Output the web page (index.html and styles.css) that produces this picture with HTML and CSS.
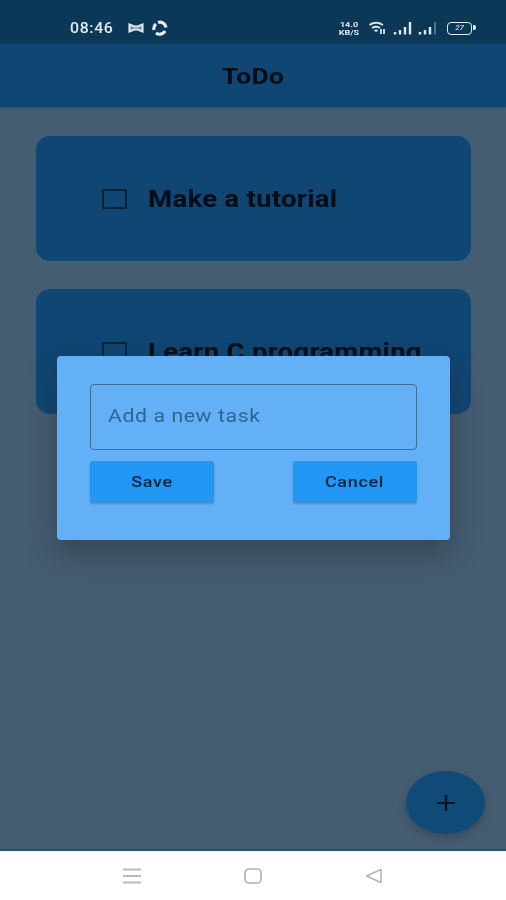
FILE: index.html
```html
<!DOCTYPE html>
<html lang="en">
<head>
<meta charset="utf-8">
<title>ToDo</title>
<link rel="stylesheet" href="styles.css">
</head>
<body>
<div class="screen">
  <header class="status">
    <div class="status-left">
      <span class="time">08:46</span>
      <svg class="ico-msg" viewBox="0 0 16 12" width="16" height="12"><path d="M1.500 2.500 L6.500 4.500 H9.500 L14.500 2.500 V9.500 L9.500 7.500 H6.500 L1.500 9.500 Z" fill="#6f8a9f" stroke="#dbe4ec" stroke-width="2.200"/></svg>
      <svg class="ico-sync" viewBox="0 0 18 16" width="18" height="16"><path d="M7 2.500 A6 6 0 0 1 15 7.500 M14 11 A6 6 0 0 1 5 13 M3 10 A6 6 0 0 1 5 4" fill="none" stroke="#e6edf3" stroke-width="3.200"/></svg>
    </div>
    <div class="status-right">
      <span class="speed"><span>14.0</span><span>KB/S</span></span>
      <svg class="ico-wifi" viewBox="0 0 20 14" width="20" height="14"><path d="M1.500 4 Q8 -0.500 15 4 M4 7 Q8 4.500 12 7 M6.500 10 Q8 9 9.500 10" fill="none" stroke="#d8e2ea" stroke-width="2"/><path d="M13 8 V13 M16 8 V13" stroke="#d8e2ea" stroke-width="1.800"/></svg>
      <svg class="ico-sig" viewBox="0 0 20 14" width="20" height="14"><path d="M2 11 V13.500 M7 9 V13.500 M12 6 V13.500 M17 1 V13.500" stroke="#dfe7ee" stroke-width="2.400"/></svg>
      <svg class="ico-sig" viewBox="0 0 20 14" width="20" height="14"><path d="M2 11 V13.500 M7 9 V13.500 M12 6 V13.500" stroke="#dfe7ee" stroke-width="2.400"/><path d="M17 1 V13.500" stroke="#6f8799" stroke-width="1.500"/></svg>
      <span class="battery"><span class="battery-num">27</span></span>
    </div>
  </header>
  <div class="appbar"><h1 class="appbar-title">ToDo</h1></div>
  <main class="content">
    <div class="card"><span class="check"></span><span class="task">Make a tutorial</span></div>
    <div class="card"><span class="check"></span><span class="task">Learn C programming</span></div>
  </main>
  <div class="dialog">
    <div class="field"><span class="placeholder">Add a new task</span></div>
    <div class="actions">
      <button class="btn" type="button"><span class="btn-label">Save</span></button>
      <button class="btn" type="button"><span class="btn-label">Cancel</span></button>
    </div>
  </div>
  <button class="fab" type="button" aria-label="Add">
    <svg viewBox="0 0 20 18" width="20" height="18"><path d="M10 1 V17 M1 9 H19" stroke="#04121f" stroke-width="2.200"/></svg>
  </button>
  <nav class="navbar">
    <svg viewBox="0 0 18 16" width="18" height="16"><path d="M0 1.500 H18 M0 8 H18 M0 14.500 H18" stroke="#b9b9b9" stroke-width="1.800"/></svg>
    <svg viewBox="0 0 18 16" width="18" height="16"><rect x="1" y="1" width="16" height="14" rx="4" fill="none" stroke="#b0b0b0" stroke-width="1.600"/></svg>
    <svg viewBox="0 0 18 16" width="18" height="16"><path d="M1.500 8 L16 1.500 V14.500 Z" fill="none" stroke="#b4b4b4" stroke-width="1.500" stroke-linejoin="round"/></svg>
  </nav>
</div>
</body>
</html>
```
FILE: styles.css
```css
* { box-sizing: border-box; margin: 0; padding: 0; }
html, body { width: 506px; height: 900px; overflow: hidden; background: #fff; }
body { font-family: Roboto, "Liberation Sans", sans-serif; }
.screen { position: relative; width: 506px; height: 900px; display: flex; flex-direction: column; background: #455d72; filter: blur(0.7px); }

.status { height: 44px; flex: none; background: #0c3858; display: flex; align-items: center; justify-content: space-between; padding: 12px 34px 0 70px; }
.status-left, .status-right { display: flex; align-items: center; }
.status-left { gap: 7px; }
.status-right { gap: 5px; }
.time { font-size: 15px; font-weight: 500; letter-spacing: 0.6px; color: #e3eaf0; margin-right: 10px; transform: scaleX(1.06); transform-origin: left center; }
.speed { display: flex; flex-direction: column; align-items: center; gap: 1px; width: 22px; font-size: 7.500px; font-weight: 700; line-height: 7px; color: #dfe7ee; margin-right: 3px; transform: scaleX(1.2); }
.battery { position: relative; width: 25px; height: 13px; border: 1.500px solid #e3eaf0; border-radius: 4px; margin-left: 4px; display: flex; align-items: center; justify-content: center; }
.battery::after { content: ""; position: absolute; right: -4.500px; top: 2.500px; width: 3px; height: 5px; background: #e3eaf0; border-radius: 0 2px 2px 0; }
.battery-num { font-size: 8px; font-style: italic; color: #e3eaf0; line-height: 1; }

.appbar { height: 63px; flex: none; background: #104673; display: flex; align-items: center; justify-content: center; padding-top: 2px; box-shadow: 0 1px 2px rgba(20, 40, 60, 0.3); }
.appbar-title { font-size: 22px; font-weight: 700; color: #030d18; letter-spacing: 0.3px; transform: scaleX(1.2); }

.content { flex: 1; padding: 29px 35px 0 36px; display: flex; flex-direction: column; gap: 28px; }
.card { height: 125px; background: #104673; border-radius: 14px; display: flex; align-items: center; padding-left: 66px; gap: 21px; }
.check { width: 25px; height: 20px; border: 2px solid #07233c; border-radius: 1px; flex: none; }
.task { font-size: 23px; font-weight: 700; color: #030d18; letter-spacing: 0.2px; white-space: nowrap; padding-top: 2px; transform: scaleX(1.2); transform-origin: left center; }

.dialog { position: absolute; left: 57px; top: 356px; width: 393px; height: 184px; background: #64b0f6; border-radius: 4px; padding: 28px 33px 0; display: flex; flex-direction: column; gap: 11px; box-shadow: 0 14px 30px rgba(30, 40, 50, 0.45); }
.field { height: 66px; border: 1.500px solid #3e6d95; border-radius: 4px; display: flex; align-items: center; padding: 0 0 3px 17px; }
.placeholder { font-size: 18px; color: #2f6592; letter-spacing: 0.5px; transform: scaleX(1.18); transform-origin: left center; }
.actions { display: flex; justify-content: space-between; }
.btn { width: 124px; height: 41px; border: 0; border-radius: 2px; background: #2196f3; color: #08243e; font-family: inherit; font-size: 15.500px; font-weight: 500; letter-spacing: 0.6px; box-shadow: 0 2px 2px rgba(20, 60, 100, 0.3); }
.btn-label { display: inline-block; transform: scaleX(1.16); }

.fab { position: absolute; left: 406px; top: 771px; width: 79px; height: 63px; border: 0; border-radius: 50%; background: #104a78; display: flex; align-items: center; justify-content: center; box-shadow: 0 4px 8px rgba(30, 40, 50, 0.35); }

.navbar { height: 51px; flex: none; background: #fff; border-top: 2px solid #1c5570; display: flex; align-items: center; justify-content: center; gap: 103px; }
```
